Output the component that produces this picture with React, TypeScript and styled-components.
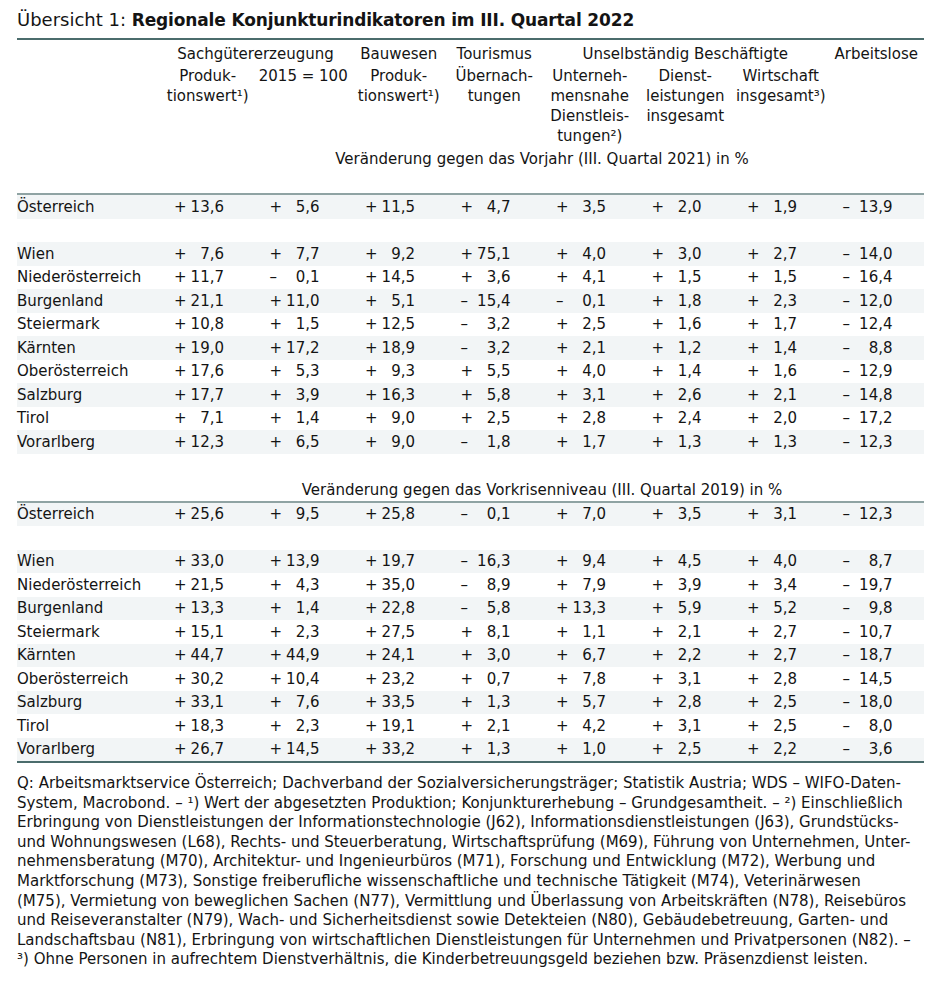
import React from 'react';
import styled, { createGlobalStyle } from 'styled-components';

const GlobalStyle = createGlobalStyle`
  html, body {
    margin: 0;
    padding: 0;
    background: #ffffff;
  }
  body {
    font-family: 'DejaVu Sans', 'Liberation Sans', sans-serif;
    color: #141414;
  }
`;

const COLS = '143px repeat(8, 95.5px)';

const Page = styled.div`
  width: 907px;
  padding: 0 16px 0 17px;
  font-size: 15px;
`;

const Title = styled.h1`
  margin: 0;
  padding: 8px 0 6px;
  font-size: 17px;
  line-height: 24px;
  font-weight: 700;
  letter-spacing: -0.15px;
  border-bottom: 2px solid #4b6c6c;
  white-space: nowrap;
`;

const TitleLead = styled.span`
  font-size: 18px;
  font-weight: 400;
  letter-spacing: 0;
`;

const HeadGrid = styled.div`
  display: grid;
  grid-template-columns: ${COLS};
  grid-template-rows: 24px 82px;
  text-align: center;
  line-height: 20px;
`;

const GroupHead = styled.div<{ $from: number; $to: number }>`
  grid-column: ${({ $from, $to }) => `${$from} / ${$to}`};
  grid-row: 1;
  align-self: end;
  white-space: nowrap;
`;

const SubHead = styled.div<{ $col: number }>`
  grid-column: ${({ $col }) => $col};
  grid-row: 2;
  padding-top: 2px;
  white-space: nowrap;
`;

const Row = styled.div<{ $shaded?: boolean; $rule?: boolean }>`
  display: grid;
  grid-template-columns: ${COLS};
  height: 23.5px;
  align-items: center;
  background: ${({ $shaded }) => ($shaded ? '#f2f5f6' : 'transparent')};
  border-top: ${({ $rule }) => ($rule ? '2px solid #8fa3a3' : 'none')};
  white-space: nowrap;
`;

const Caption = styled.div`
  grid-column: 2 / 10;
  text-align: center;
  padding-top: 3px;
`;

const Label = styled.div`
  grid-column: 1;
`;

const NumCell = styled.div`
  padding-left: 14px;
`;

const Value = styled.div`
  display: flex;
  justify-content: space-between;
  width: 50px;
`;

const TableEnd = styled.div`
  border-top: 2px solid #4b6c6c;
`;

const Notes = styled.div`
  margin-top: 11px;
  line-height: 19.6px;
`;

const NoteLine = styled.div`
  white-space: nowrap;
`;

type Region = [string, string[]];

const current: Region[] = [
  ['Österreich', ['+13,6', '+5,6', '+11,5', '+4,7', '+3,5', '+2,0', '+1,9', '–13,9']],
  ['Wien', ['+7,6', '+7,7', '+9,2', '+75,1', '+4,0', '+3,0', '+2,7', '–14,0']],
  ['Niederösterreich', ['+11,7', '–0,1', '+14,5', '+3,6', '+4,1', '+1,5', '+1,5', '–16,4']],
  ['Burgenland', ['+21,1', '+11,0', '+5,1', '–15,4', '–0,1', '+1,8', '+2,3', '–12,0']],
  ['Steiermark', ['+10,8', '+1,5', '+12,5', '–3,2', '+2,5', '+1,6', '+1,7', '–12,4']],
  ['Kärnten', ['+19,0', '+17,2', '+18,9', '–3,2', '+2,1', '+1,2', '+1,4', '–8,8']],
  ['Oberösterreich', ['+17,6', '+5,3', '+9,3', '+5,5', '+4,0', '+1,4', '+1,6', '–12,9']],
  ['Salzburg', ['+17,7', '+3,9', '+16,3', '+5,8', '+3,1', '+2,6', '+2,1', '–14,8']],
  ['Tirol', ['+7,1', '+1,4', '+9,0', '+2,5', '+2,8', '+2,4', '+2,0', '–17,2']],
  ['Vorarlberg', ['+12,3', '+6,5', '+9,0', '–1,8', '+1,7', '+1,3', '+1,3', '–12,3']],
];

const preCrisis: Region[] = [
  ['Österreich', ['+25,6', '+9,5', '+25,8', '–0,1', '+7,0', '+3,5', '+3,1', '–12,3']],
  ['Wien', ['+33,0', '+13,9', '+19,7', '–16,3', '+9,4', '+4,5', '+4,0', '–8,7']],
  ['Niederösterreich', ['+21,5', '+4,3', '+35,0', '–8,9', '+7,9', '+3,9', '+3,4', '–19,7']],
  ['Burgenland', ['+13,3', '+1,4', '+22,8', '–5,8', '+13,3', '+5,9', '+5,2', '–9,8']],
  ['Steiermark', ['+15,1', '+2,3', '+27,5', '+8,1', '+1,1', '+2,1', '+2,7', '–10,7']],
  ['Kärnten', ['+44,7', '+44,9', '+24,1', '+3,0', '+6,7', '+2,2', '+2,7', '–18,7']],
  ['Oberösterreich', ['+30,2', '+10,4', '+23,2', '+0,7', '+7,8', '+3,1', '+2,8', '–14,5']],
  ['Salzburg', ['+33,1', '+7,6', '+33,5', '+1,3', '+5,7', '+2,8', '+2,5', '–18,0']],
  ['Tirol', ['+18,3', '+2,3', '+19,1', '+2,1', '+4,2', '+3,1', '+2,5', '–8,0']],
  ['Vorarlberg', ['+26,7', '+14,5', '+33,2', '+1,3', '+1,0', '+2,5', '+2,2', '–3,6']],
];

const notes = [
  'Q: Arbeitsmarktservice Österreich; Dachverband der Sozialversicherungsträger; Statistik Austria; WDS – WIFO-Daten-',
  'System, Macrobond. – ¹) Wert der abgesetzten Produktion; Konjunkturerhebung – Grundgesamtheit. – ²) Einschließlich',
  'Erbringung von Dienstleistungen der Informationstechnologie (J62), Informationsdienstleistungen (J63), Grundstücks-',
  'und Wohnungswesen (L68), Rechts- und Steuerberatung, Wirtschaftsprüfung (M69), Führung von Unternehmen, Unter-',
  'nehmensberatung (M70), Architektur- und Ingenieurbüros (M71), Forschung und Entwicklung (M72), Werbung und',
  'Marktforschung (M73), Sonstige freiberufliche wissenschaftliche und technische Tätigkeit (M74), Veterinärwesen',
  '(M75), Vermietung von beweglichen Sachen (N77), Vermittlung und Überlassung von Arbeitskräften (N78), Reisebüros',
  'und Reiseveranstalter (N79), Wach- und Sicherheitsdienst sowie Detekteien (N80), Gebäudebetreuung, Garten- und',
  'Landschaftsbau (N81), Erbringung von wirtschaftlichen Dienstleistungen für Unternehmen und Privatpersonen (N82). –',
  '³) Ohne Personen in aufrechtem Dienstverhältnis, die Kinderbetreuungsgeld beziehen bzw. Präsenzdienst leisten.',
];

const Num: React.FC<{ value: string }> = ({ value }) => (
  <NumCell>
    <Value>
      <span>{value[0]}</span>
      <span>{value.slice(1)}</span>
    </Value>
  </NumCell>
);

const RegionRow: React.FC<{ region: Region; shaded: boolean; rule?: boolean }> = ({ region, shaded, rule }) => (
  <Row $shaded={shaded} $rule={rule}>
    <Label>{region[0]}</Label>
    {region[1].map((v, i) => (
      <Num key={i} value={v} />
    ))}
  </Row>
);

const Section: React.FC<{ rows: Region[] }> = ({ rows }) => (
  <>
    <RegionRow region={rows[0]} shaded rule />
    <Row />
    {rows.slice(1).map((r, i) => (
      <RegionRow key={r[0]} region={r} shaded={i % 2 === 0} />
    ))}
  </>
);

export default function App() {
  return (
    <Page>
      <GlobalStyle />
      <Title>
        <TitleLead>Übersicht 1: </TitleLead>Regionale Konjunkturindikatoren im III. Quartal 2022
      </Title>

      <HeadGrid>
        <GroupHead $from={2} $to={4}>Sachgütererzeugung</GroupHead>
        <GroupHead $from={4} $to={5}>Bauwesen</GroupHead>
        <GroupHead $from={5} $to={6}>Tourismus</GroupHead>
        <GroupHead $from={6} $to={9}>Unselbständig Beschäftigte</GroupHead>
        <GroupHead $from={9} $to={10}>Arbeitslose</GroupHead>
        <SubHead $col={2}>Produk-<br />tionswert¹)</SubHead>
        <SubHead $col={3}>2015 = 100</SubHead>
        <SubHead $col={4}>Produk-<br />tionswert¹)</SubHead>
        <SubHead $col={5}>Übernach-<br />tungen</SubHead>
        <SubHead $col={6}>Unterneh-<br />mensnahe<br />Dienstleis-<br />tungen²)</SubHead>
        <SubHead $col={7}>Dienst-<br />leistungen<br />insgesamt</SubHead>
        <SubHead $col={8}>Wirtschaft<br />insgesamt³)</SubHead>
      </HeadGrid>

      <Row>
        <Caption>Veränderung gegen das Vorjahr (III. Quartal 2021) in %</Caption>
      </Row>
      <Row />
      <Section rows={current} />
      <Row />
      <Row>
        <Caption>Veränderung gegen das Vorkrisenniveau (III. Quartal 2019) in %</Caption>
      </Row>
      <Section rows={preCrisis} />
      <TableEnd />

      <Notes>
        {notes.map((n) => (
          <NoteLine key={n}>{n}</NoteLine>
        ))}
      </Notes>
    </Page>
  );
}
